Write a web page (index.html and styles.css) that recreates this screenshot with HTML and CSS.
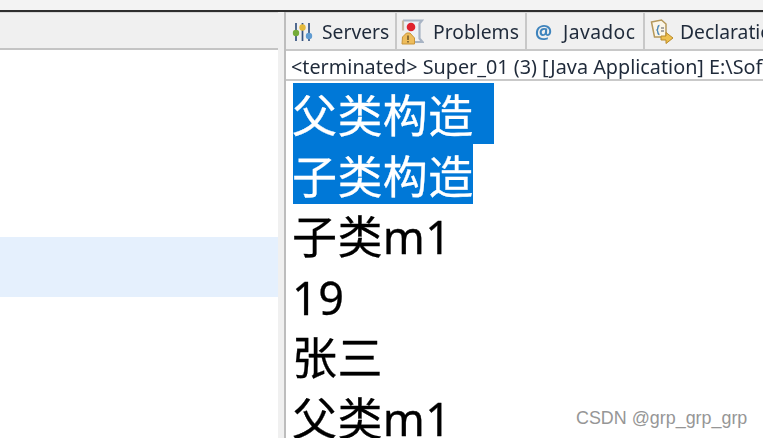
FILE: index.html
```html
<!DOCTYPE html>
<html lang="zh-CN">
<head>
<meta charset="utf-8">
<title>Console</title>
<link rel="stylesheet" href="styles.css">
</head>
<body>
<div class="window">
  <div class="topbar"></div>
  <div class="panes">
    <div class="left">
      <div class="left-head"></div>
      <div class="left-list">
        <div class="row-selected"></div>
      </div>
    </div>
    <div class="right">
      <div class="tabs">
        <div class="tab tab-servers">
          <svg class="icon" width="21" height="20" viewBox="0 0 21 20">
            <path d="M4 1v18M10.500 1v18M17 1v18" stroke="#34527f" stroke-width="1.700" fill="none"/>
            <circle cx="4" cy="11" r="3.200" fill="#74ab38"/>
            <circle cx="10.500" cy="5.500" r="3.200" fill="#e3b93a"/>
            <circle cx="17" cy="14" r="3.200" fill="#5f9bd1"/>
          </svg>
          <span>Servers</span>
        </div>
        <div class="tab tab-problems">
          <svg class="icon" width="23" height="26" viewBox="0 0 23 26">
            <path d="M2 1.500h19l-2.500 3v15l3 3.500h-9" stroke="#a8b4c4" stroke-width="2.200" fill="#eef1f5"/>
            <path d="M2 1.500v10" stroke="#c9b9a0" stroke-width="2.200"/>
            <circle cx="10" cy="8" r="4.300" fill="#e0232e"/>
            <path d="M1 25l.5-7 4-4h3.500l4.500 5v6z" fill="#eebd5c" stroke="#c9953a"/>
            <path d="M7 16.500v4.500M7 22v1.500" stroke="#5b4520" stroke-width="1.300"/>
          </svg>
          <span>Problems</span>
        </div>
        <div class="tab tab-javadoc">
          <span class="at">@</span>
          <span>Javadoc</span>
        </div>
        <div class="tab tab-declaration">
          <svg class="icon" width="24" height="26" viewBox="0 0 24 26">
            <path d="M1.500 3l10-2 4.500 4v13H4.500z" fill="#fbf6e8" stroke="#b5985a" stroke-width="1.500"/>
            <path d="M9.500 6.500c-2.500 0-1 3.500-2.500 4.500 1.500 1 0 4.500 2.500 4.500" stroke="#4a86b8" stroke-width="1.400" fill="none"/>
            <path d="M11 9h3M11 12h3" stroke="#8c8c8c" stroke-width="1.300"/>
            <path d="M11 17h5v-3.500l7 5.500-7 5.500V21h-5z" fill="#eec04e" stroke="#b98a2a"/>
          </svg>
          <span>Declaration</span>
        </div>
      </div>
      <div class="console">
        <div class="console-head">&lt;terminated&gt; Super_01 (3) [Java Application] E:\Soft</div>
        <div class="output">
          <div class="line"><span class="sel sel-wide">父类构造</span></div>
          <div class="line"><span class="sel">子类构造</span></div>
          <div class="line">子类m1</div>
          <div class="line">19</div>
          <div class="line">张三</div>
          <div class="line">父类m1</div>
        </div>
      </div>
    </div>
  </div>
</div>
<div class="watermark">CSDN @grp_grp_grp</div>
</body>
</html>
```
FILE: styles.css
```css
html, body {
  margin: 0;
  padding: 0;
  height: 100%;
  overflow: hidden;
  background: #fff;
}
.window {
  width: 763px;
  height: 438px;
  display: flex;
  flex-direction: column;
  overflow: hidden;
  filter: blur(0.4px);
}
.topbar {
  flex: none;
  height: 10px;
  background: #f3f3f3;
  border-bottom: 2px solid #2e2e2e;
}
.panes {
  flex: 1;
  display: flex;
  min-height: 0;
  background: #f0f0f0;
}
.left {
  flex: none;
  width: 278px;
  display: flex;
  flex-direction: column;
}
.left-head {
  flex: none;
  height: 35px;
  background: #f0f0f0;
  border-top: 1px solid #d8d8d8;
  border-bottom: 2px solid #c4c4c4;
}
.left-list {
  flex: 1;
  background: #fff;
  padding-top: 187px;
}
.row-selected {
  height: 60px;
  background: #e5f0fd;
}
.right {
  flex: none;
  width: 477px;
  margin-left: 6px;
  border-left: 2px solid #bdbdbd;
  display: flex;
  flex-direction: column;
  min-width: 0;
}
.tabs {
  flex: none;
  height: 36px;
  display: flex;
  align-items: stretch;
  background: #f0f0f0;
  border-top: 1px solid #d8d8d8;
  border-bottom: 2px solid #c8c8c8;
  font: 19.300px "Noto Sans", sans-serif;
  color: #1f2a3a;
  white-space: nowrap;
}
.tab {
  flex: none;
  display: flex;
  align-items: center;
  box-sizing: border-box;
  padding-top: 1px;
  border-right: 2px solid #c8c8c8;
}
.tab-servers { width: 111px; padding-left: 6px; gap: 9px; }
.tab-problems { width: 130px; padding-left: 4px; gap: 9px; }
.tab-javadoc { width: 118px; padding-left: 8px; gap: 11px; letter-spacing: 0.4px; }
.tab-declaration { padding-left: 5px; gap: 6px; border-right: 0; }
.icon { flex: none; display: block; }
.at {
  color: #3f84bd;
  font-weight: 700;
  font-size: 19px;
  letter-spacing: 0;
}
.console {
  flex: 1;
  background: #fff;
  min-height: 0;
  overflow: hidden;
}
.console-head {
  box-sizing: border-box;
  height: 30px;
  padding: 3px 0 0 5px;
  border-bottom: 2px solid #c9c9c9;
  font: 19.800px/26px "Noto Sans", sans-serif;
  color: #1f2a3a;
  white-space: nowrap;
}
.output {
  padding: 2px 0 0 7px;
  font: 45px/65px "Noto Sans", "Noto Sans CJK SC", sans-serif;
  color: #000;
  white-space: nowrap;
  letter-spacing: 0.4px;
  -webkit-text-stroke: 0.3px currentColor;
  text-indent: -1px;
}
.line { height: 60.500px; }
.sel {
  display: block;
  width: 180px;
  height: 60.500px;
  background: #0078d7;
  color: #fff;
}
.sel-wide { width: 201px; }
.watermark {
  position: absolute;
  left: 576px;
  top: 408px;
  font: 17.900px/20px "Liberation Sans", sans-serif;
  color: #969696;
  white-space: nowrap;
}
```
